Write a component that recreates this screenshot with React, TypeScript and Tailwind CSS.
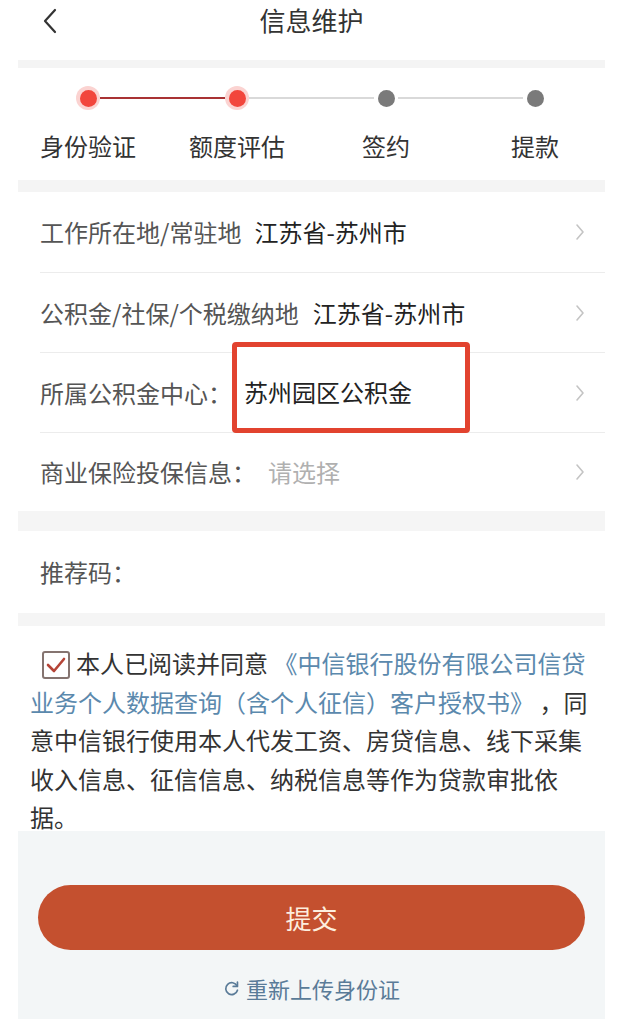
import { Fragment } from 'react';

const font = { fontFamily: '"Noto Sans CJK SC", "Noto Sans", sans-serif' };

function Chevron() {
  return (
    <svg className="ml-auto h-[18px] w-[10px]" viewBox="0 0 10 18" fill="none" stroke="#c4c4c4" strokeWidth={1.6}>
      <path d="M2 2l6 7-6 7" strokeLinecap="round" strokeLinejoin="round" />
    </svg>
  );
}

function Dot({ active }: { active: boolean }) {
  return active ? (
    <div className="flex h-6 w-6 shrink-0 items-center justify-center rounded-full bg-[#fbd3d1]">
      <div className="h-[17px] w-[17px] rounded-full bg-[#f2463c]"></div>
    </div>
  ) : (
    <div className="flex h-6 w-6 shrink-0 items-center justify-center">
      <div className="h-[17px] w-[17px] rounded-full bg-[#7a7a7a]"></div>
    </div>
  );
}

const steps = ['身份验证', '额度评估', '签约', '提款'];

export default function App() {
  return (
    <div className="min-h-screen bg-white text-[24px] text-[#333]" style={font}>
      <div className="ml-[18px] mr-[15px]">
        {/* header */}
        <div className="relative flex h-[60px] items-start justify-center pt-[2px]">
          <svg className="absolute left-[24px] top-[8px] h-[26px] w-[16px]" viewBox="0 0 16 26" fill="none" stroke="#333" strokeWidth={2.2}>
            <path d="M13 2L3 13l10 11" strokeLinecap="round" strokeLinejoin="round" />
          </svg>
          <span className="text-[26px] leading-[36px] text-[#333]">信息维护</span>
        </div>
        <div className="h-[8px] bg-[#f4f4f4]"></div>

        {/* stepper */}
        <div className="h-[112px] pt-[18px]">
          <div className="flex h-6 items-center pl-[58px] pr-[58px]">
            {steps.map((s, i) => (
              <Fragment key={s}>
                {i > 0 && <div className={`h-[2px] flex-1 ${i === 1 ? 'bg-[#a93334]' : 'bg-[#d9d9d9]'}`}></div>}
                <Dot active={i < 2} />
              </Fragment>
            ))}
          </div>
          <div className="mt-[20px] flex h-[32px] items-center pl-[58px] pr-[58px]">
            {steps.map((s, i) => (
              <Fragment key={s}>
                {i > 0 && <div className="flex-1"></div>}
                <div className="flex w-6 shrink-0 justify-center whitespace-nowrap leading-[32px] text-[#333]">{s}</div>
              </Fragment>
            ))}
          </div>
        </div>
        <div className="h-[12px] bg-[#f4f4f4]"></div>

        {/* rows */}
        <div className="ml-[22px]">
          <div className="flex h-[81px] items-center border-b border-[#ececec] pr-[20px]">
            <span className="text-[#555]">工作所在地/常驻地</span>
            <span className="ml-[13px] text-[#222]">江苏省-苏州市</span>
            <Chevron />
          </div>
          <div className="flex h-[80px] items-center border-b border-[#ececec] pr-[20px]">
            <span className="text-[#555]">公积金/社保/个税缴纳地</span>
            <span className="ml-[14px] text-[#222]">江苏省-苏州市</span>
            <Chevron />
          </div>
          <div className="relative flex h-[80px] items-center border-b border-[#ececec] pr-[20px]">
            <span className="text-[#555]">所属公积金中心：</span>
            <div className="absolute left-[192px] top-[-11px] z-10 flex h-[91px] w-[238px] items-center rounded-[4px] border-[5px] border-[#e2432f] bg-white pl-[7px] pt-[8px] text-[#222]">
              苏州园区公积金
            </div>
            <Chevron />
          </div>
          <div className="flex h-[78px] items-center pr-[20px]">
            <span className="text-[#555]">商业保险投保信息：</span>
            <span className="ml-[12px] text-[#b0b0b0]">请选择</span>
            <Chevron />
          </div>
        </div>
        <div className="h-[20px] bg-[#f5f5f5]"></div>

        <div className="flex h-[82px] items-center pl-[22px] text-[#555]">推荐码：</div>
        <div className="h-[13px] bg-[#f5f5f5]"></div>

        {/* agreement */}
        <div className="h-[205px] pl-[12px] pt-[18px]">
          <p className="w-[562px] leading-[38.5px] text-[#333]">
            <span className="ml-[12px] mr-[6px] inline-flex h-[28px] w-[28px] translate-y-[-1px] items-center justify-center rounded-[3px] border-2 border-[#857470] align-middle">
              <svg className="h-[18px] w-[20px]" viewBox="0 0 20 18" fill="none" stroke="#b54437" strokeWidth={2.6}>
                <path d="M2 9l6 6L18 3" strokeLinecap="round" strokeLinejoin="round" />
              </svg>
            </span>
            <span>本人已阅读并同意 </span>
            <span className="text-[#5b89ad]">《中信银行股份有限公司信贷</span>
            <br />
            <span className="text-[#5b89ad]">业务个人数据查询（含个人征信）客户授权书》</span>
            <span> ，同</span>
            <br />
            <span>意中信银行使用本人代发工资、房贷信息、线下采集</span>
            <br />
            <span>收入信息、征信信息、纳税信息等作为贷款审批依</span>
            <br />
            <span>据。</span>
          </p>
        </div>

        {/* bottom */}
        <div className="flex h-[188px] flex-col items-center bg-[#f3f6f7] px-[20px] pt-[54px]">
          <button className="flex h-[65px] w-full items-center justify-center rounded-full bg-[#c4502f] text-[26px] text-[#fdeede]">
            提交
          </button>
          <div className="mt-[22px] flex items-center gap-[6px] text-[22px] leading-[32px] text-[#5a7b98]">
            <svg className="h-[17px] w-[17px]" viewBox="0 0 20 20" fill="none" stroke="#5a7b98" strokeWidth={2}>
              <path d="M16.5 7A7 7 0 1 0 17 12" strokeLinecap="round" />
              <path d="M17 2.5V7.5H12" strokeLinecap="round" strokeLinejoin="round" />
            </svg>
            重新上传身份证
          </div>
        </div>
      </div>
    </div>
  );
}
